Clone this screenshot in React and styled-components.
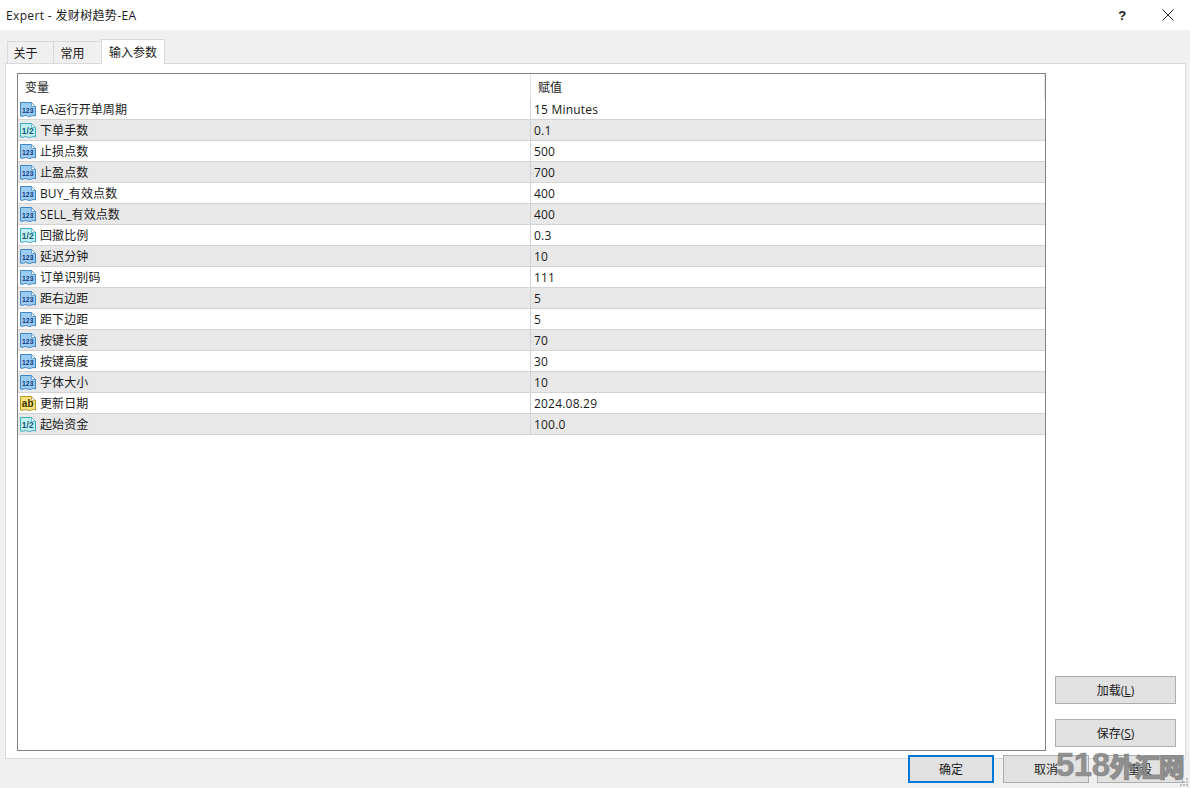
import styled, { createGlobalStyle } from "styled-components";

const GlobalStyle = createGlobalStyle`
html, body {
  margin: 0;
  padding: 0;
  background: #f0f0f0;
}
* {
  box-sizing: border-box;
}
`;

const Dialog = styled.div`
position: relative;
width: 1190px;
height: 788px;
overflow: hidden;
display: flex;
flex-direction: column;
background: #f0f0f0;
color: #1a1a1a;
font-family: "Open Sans", "Noto Sans CJK SC", sans-serif;
font-size: 12px;
`;

const TitleBar = styled.div`
height: 30px;
flex: none;
background: #fff;
display: flex;
align-items: center;
padding-left: 6px;
font-size: 12px;
letter-spacing: 0.35px;
`;

const TitleText = styled.span`
flex: 1;
`;

const TitleButton = styled.div`
width: 45px;
height: 30px;
display: flex;
align-items: center;
justify-content: center;
font-size: 13px;
font-weight: 600;
font-family: "Liberation Sans", sans-serif;
`;

const TabStrip = styled.div`
height: 33px;
flex: none;
padding-left: 7px;
display: flex;
align-items: flex-end;
position: relative;
z-index: 1;
`;

const Tab = styled.div`
width: ${(p) => p.$width}px;
height: ${(p) => (p.$active ? 25 : 23)}px;
margin-left: ${(p) => (p.$first ? 0 : -1)}px;
margin-bottom: -1px;
padding-right: ${(p) => (p.$active ? 0 : 10)}px;
display: flex;
align-items: center;
justify-content: center;
background: ${(p) => (p.$active ? "#fff" : "#f0f0f0")};
border: 1px solid #d9d9d9;
border-bottom: ${(p) => (p.$active ? "none" : "1px solid #d9d9d9")};
`;

const Panel = styled.div`
width: 1181px;
height: 696px;
flex: none;
margin-left: 5px;
background: #fff;
border: 1px solid #d9d9d9;
padding: 9px 9px 7px 11px;
display: flex;
gap: 9px;
`;

const ListBox = styled.div`
width: 1029px;
height: 678px;
flex: none;
border: 1px solid #828282;
`;

const HeaderRow = styled.div`
height: 25px;
display: grid;
grid-template-columns: 513px 514px;
`;

const HeaderCell = styled.div`
display: flex;
align-items: center;
padding-left: 7px;
border-right: 1px solid #e5e5e5;
`;

const Row = styled.div`
height: 21px;
display: grid;
grid-template-columns: 513px 514px;
background: ${(p) => (p.$alt ? "#e8e8e8" : "#fff")};
border-bottom: 1px solid #d4d4d4;
`;

const NameCell = styled.div`
display: flex;
align-items: center;
gap: 3px;
padding-left: 1px;
border-right: 1px solid #d4d4d4;
white-space: nowrap;
letter-spacing: 0.1px;
`;

const ValueCell = styled.div`
display: flex;
align-items: center;
padding-left: 3px;
letter-spacing: 0.2px;
`;

const SideButtons = styled.div`
flex: 1;
display: flex;
flex-direction: column;
justify-content: flex-end;
gap: 15px;
padding-bottom: 4px;
`;

const Button = styled.div`
width: ${(p) => p.$width || 86}px;
height: 28px;
margin-right: ${(p) => (p.$primary ? 1 : 0)}px;
display: flex;
align-items: center;
justify-content: center;
background: #e1e1e1;
border: ${(p) => (p.$primary ? "2px solid #0078d7" : "1px solid #adadad")};
`;

const Underlined = styled.span`
text-decoration: underline;
`;

const Footer = styled.div`
display: flex;
justify-content: flex-end;
gap: 8px;
padding-right: 7px;
margin-top: -4px;
position: relative;
`;

const Watermark = styled.div`
position: absolute;
left: 1056px;
top: 745px;
display: flex;
align-items: center;
height: 40px;
color: rgba(130, 130, 130, 0.85);
font-weight: 700;
white-space: nowrap;
`;

const WatermarkDigits = styled.span`
font-family: "Liberation Sans", sans-serif;
font-size: 33px;
letter-spacing: -0.5px;
-webkit-text-stroke: 0.6px rgba(130, 130, 130, 0.85);
`;

const WatermarkHan = styled.span`
font-family: "Noto Sans CJK SC", sans-serif;
font-size: 26px;
font-weight: 900;
letter-spacing: -1.4px;
-webkit-text-stroke: 1px rgba(130, 130, 130, 0.85);
`;

const Grip = styled.svg`
position: absolute;
right: 1px;
bottom: 1px;
`;

const ICON_COLORS = {
  int: { fill: "#9ccbf0", stroke: "#3f86c4", label: "#0f3a86", text: "123", size: 6.8 },
  dbl: { fill: "#c0f0f2", stroke: "#3faabc", label: "#135a78", text: "1/2", size: 8.4 },
  str: { fill: "#f8e27c", stroke: "#b3962c", label: "#403200", text: "ab", size: 10 },
};

const TypeIcon = ({ type }) => {
  const c = ICON_COLORS[type];
  return (
    <svg width="18" height="18" viewBox="0 0 18 18">
      <path
        d="M1.5 2.5 H12.5 L16.5 6.5 V16 Q14.5 14.8 12.5 16 Q10.5 17 8.5 16 Q6.5 15 4.5 16 Q3 16.8 1.5 16 Z"
        fill={c.fill}
        stroke={c.stroke}
      />
      <path d="M12.5 2.5 V6.5 H16.5 Z" fill="#fff" stroke={c.stroke} strokeWidth="0.7" />
      <text
        x="8.8"
        y="13"
        textAnchor="middle"
        fontSize={c.size}
        fontWeight="700"
        fontFamily="Liberation Sans, sans-serif"
        fill={c.label}
      >
        {c.text}
      </text>
    </svg>
  );
};

const params = [
  ["int", "EA运行开单周期", "15 Minutes"],
  ["dbl", "下单手数", "0.1"],
  ["int", "止损点数", "500"],
  ["int", "止盈点数", "700"],
  ["int", "BUY_有效点数", "400"],
  ["int", "SELL_有效点数", "400"],
  ["dbl", "回撤比例", "0.3"],
  ["int", "延迟分钟", "10"],
  ["int", "订单识别码", "111"],
  ["int", "距右边距", "5"],
  ["int", "距下边距", "5"],
  ["int", "按键长度", "70"],
  ["int", "按键高度", "30"],
  ["int", "字体大小", "10"],
  ["str", "更新日期", "2024.08.29"],
  ["dbl", "起始资金", "100.0"],
];

const App = () => {
  return (
    <Dialog>
      <GlobalStyle />
      <TitleBar>
        <TitleText>Expert - 发财树趋势-EA</TitleText>
        <TitleButton>?</TitleButton>
        <TitleButton>
          <svg width="12" height="12" viewBox="0 0 12 12">
            <path d="M0.5 0.5 L11.5 11.5 M11.5 0.5 L0.5 11.5" stroke="#222" fill="none" />
          </svg>
        </TitleButton>
      </TitleBar>
      <TabStrip>
        <Tab $width={47} $first>关于</Tab>
        <Tab $width={49}>常用</Tab>
        <Tab $width={64} $active>输入参数</Tab>
      </TabStrip>
      <Panel>
        <ListBox>
          <HeaderRow>
            <HeaderCell>变量</HeaderCell>
            <HeaderCell>赋值</HeaderCell>
          </HeaderRow>
          {params.map(([type, name, value], i) => (
            <Row key={name} $alt={i % 2 === 1}>
              <NameCell>
                <TypeIcon type={type} />
                {name}
              </NameCell>
              <ValueCell>{value}</ValueCell>
            </Row>
          ))}
        </ListBox>
        <SideButtons>
          <Button $width={121}>加载(<Underlined>L</Underlined>)</Button>
          <Button $width={121}>保存(<Underlined>S</Underlined>)</Button>
        </SideButtons>
      </Panel>
      <Footer>
        <Button $primary>确定</Button>
        <Button>取消</Button>
        <Button>重设</Button>
      </Footer>
      <Watermark>
        <WatermarkDigits>518</WatermarkDigits>
        <WatermarkHan>外汇网</WatermarkHan>
      </Watermark>
      <Grip width="10" height="10" viewBox="0 0 10 10">
        <path d="M7 1h2v2H7z M4 4h2v2H4z M7 4h2v2H7z M1 7h2v2H1z M4 7h2v2H4z M7 7h2v2H7z" fill="#bdbdbd" />
      </Grip>
    </Dialog>
  );
};

export default App;
